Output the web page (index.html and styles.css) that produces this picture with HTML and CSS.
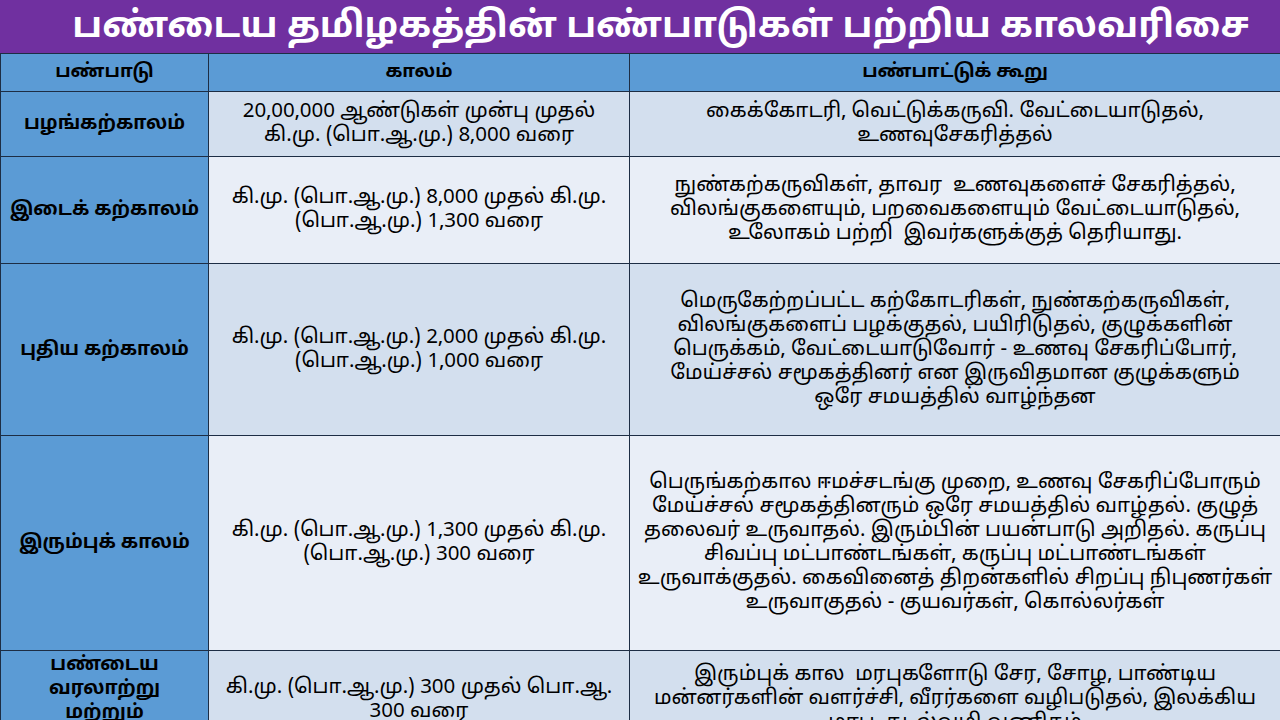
FILE: index.html
```html
<!DOCTYPE html>
<html lang="ta">
<head>
<meta charset="utf-8">
<title>பண்டைய தமிழகத்தின் பண்பாடுகள் பற்றிய காலவரிசை</title>
<link rel="stylesheet" href="styles.css">
</head>
<body>
<div class="page">
  <header class="title-bar">
    <h1 class="title">பண்டைய தமிழகத்தின் பண்பாடுகள் பற்றிய காலவரிசை</h1>
  </header>
  <table class="timeline">
    <colgroup>
      <col class="c1"><col class="c2"><col class="c3">
    </colgroup>
    <thead>
      <tr class="head-row">
        <th>பண்பாடு</th>
        <th>காலம்</th>
        <th>பண்பாட்டுக் கூறு</th>
      </tr>
    </thead>
    <tbody>
      <tr class="row r1 odd">
        <th>பழங்கற்காலம்</th>
        <td>20,00,000 ஆண்டுகள் முன்பு முதல்<br>கி.மு. (பொ.ஆ.மு.) 8,000 வரை</td>
        <td>கைக்கோடரி, வெட்டுக்கருவி. வேட்டையாடுதல்,<br>உணவுசேகரித்தல்</td>
      </tr>
      <tr class="row r2 even">
        <th>இடைக் கற்காலம்</th>
        <td>கி.மு. (பொ.ஆ.மு.) 8,000 முதல் கி.மு.<br>(பொ.ஆ.மு.) 1,300 வரை</td>
        <td>நுண்கற்கருவிகள், தாவர&nbsp; உணவுகளைச் சேகரித்தல்,<br>விலங்குகளையும், பறவைகளையும் வேட்டையாடுதல்,<br>உலோகம் பற்றி&nbsp; இவர்களுக்குத் தெரியாது.</td>
      </tr>
      <tr class="row r3 odd">
        <th>புதிய கற்காலம்</th>
        <td>கி.மு. (பொ.ஆ.மு.) 2,000 முதல் கி.மு.<br>(பொ.ஆ.மு.) 1,000 வரை</td>
        <td>மெருகேற்றப்பட்ட கற்கோடரிகள், நுண்கற்கருவிகள்,<br>விலங்குகளைப் பழக்குதல், பயிரிடுதல், குழுக்களின்<br>பெருக்கம், வேட்டையாடுவோர் - உணவு சேகரிப்போர்,<br>மேய்ச்சல் சமூகத்தினர் என இருவிதமான குழுக்களும்<br>ஒரே சமயத்தில் வாழ்ந்தன</td>
      </tr>
      <tr class="row r4 even">
        <th>இரும்புக் காலம்</th>
        <td>கி.மு. (பொ.ஆ.மு.) 1,300 முதல் கி.மு.<br>(பொ.ஆ.மு.) 300 வரை</td>
        <td>பெருங்கற்கால ஈமச்சடங்கு முறை, உணவு சேகரிப்போரும்<br>மேய்ச்சல் சமூகத்தினரும் ஒரே சமயத்தில் வாழ்தல். குழுத்<br>தலைவர் உருவாதல். இரும்பின் பயன்பாடு அறிதல். கருப்பு<br>சிவப்பு மட்பாண்டங்கள், கருப்பு மட்பாண்டங்கள்<br>உருவாக்குதல். கைவினைத் திறன்களில் சிறப்பு நிபுணர்கள்<br>உருவாகுதல் - குயவர்கள், கொல்லர்கள்</td>
      </tr>
      <tr class="row r5 odd">
        <th>பண்டைய<br>வரலாற்று<br>மற்றும்</th>
        <td class="top mid">கி.மு. (பொ.ஆ.மு.) 300 முதல் பொ.ஆ.<br>300 வரை</td>
        <td class="top">இரும்புக் கால&nbsp; மரபுகளோடு சேர, சோழ, பாண்டிய<br>மன்னர்களின் வளர்ச்சி, வீரர்களை வழிபடுதல், இலக்கிய<br>மரபு, கடல்வழி வணிகம்</td>
      </tr>
    </tbody>
  </table>
</div>
</body>
</html>
```

FILE: styles.css
```css
html, body {
  margin: 0;
  padding: 0;
  background: #ffffff;
}

.page {
  width: 1280px;
  height: 720px;
  overflow: hidden;
  font-family: "Noto Sans Tamil", "Latha", "Noto Sans", "DejaVu Sans", sans-serif;
  color: #000;
}

.title-bar {
  background: #7030a0;
  height: 53px;
  display: flex;
  align-items: center;
  justify-content: center;
}

.title {
  margin: 0;
  color: #ffffff;
  font-size: 36px;
  font-weight: 700;
  line-height: 53px;
  padding-left: 42px;
  padding-top: 4px;
  white-space: nowrap;
}

.timeline {
  width: 1280px;
  border-collapse: collapse;
  table-layout: fixed;
}

.c1 { width: 208px; }
.c2 { width: 421px; }
.c3 { width: 651px; }

.timeline th,
.timeline td {
  border: 1.5px solid #1d2d44;
  text-align: center;
  vertical-align: middle;
  padding: 0 2px;
  font-size: 20.5px;
  line-height: 24px;
  font-weight: 400;
  white-space: nowrap;
}

.head-row {
  height: 38px;
}

.head-row th {
  background: #5b9bd5;
  font-weight: 700;
  font-size: 18.5px;
}

.row th {
  background: #5b9bd5;
  font-weight: 700;
  font-size: 19px;
}

.odd td { background: #d3dfee; }
.even td { background: #e9eef7; }

.r1 { height: 65px; }
.r2 { height: 107px; }
.r3 { height: 172px; }
.r4 { height: 215px; }
.r5 { height: 90px; }

.r5 th,
.r5 td.top {
  vertical-align: top;
  padding-top: 2px;
}
.r5 td.top { padding-top: 12px; }
.r5 td.mid { padding-top: 25px; }
.r5 th { line-height: 24px; }
```
